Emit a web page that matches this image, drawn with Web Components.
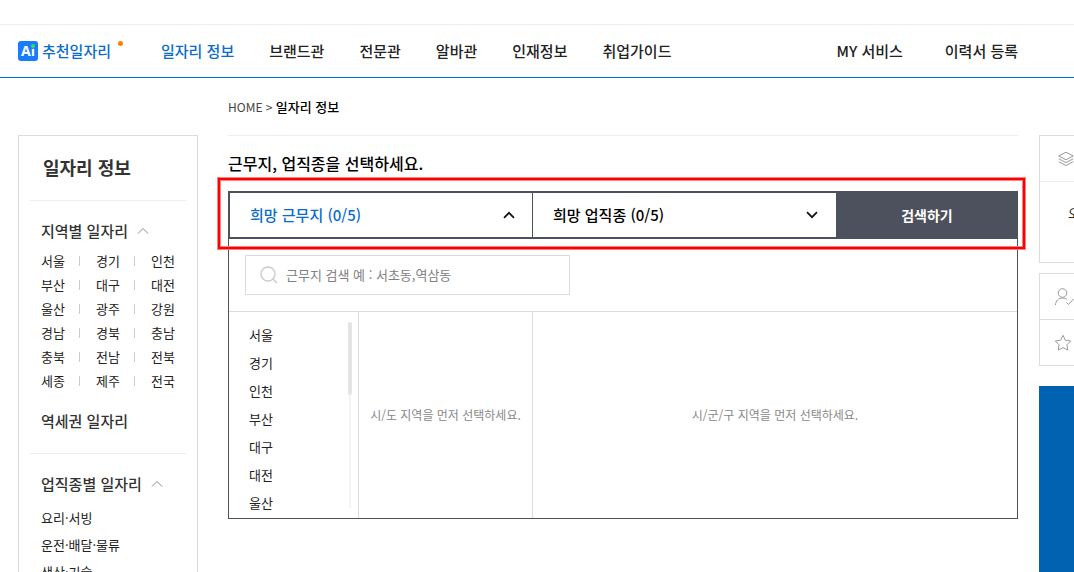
<!DOCTYPE html>
<html lang="ko">
<head>
<meta charset="utf-8">
<title>일자리 정보</title>
<style>
html{overflow:hidden}
body{margin:0;background:#fff;color:#222;font:13px/20px "Noto Sans CJK KR","Noto Sans",sans-serif}
</style>
</head>
<body>
<job-page></job-page>
<script>
const BASE = `*{box-sizing:border-box}
a{color:inherit;text-decoration:none}
ul,h1,h2,p{margin:0;padding:0;list-style:none;font-weight:inherit;font-size:inherit}
button,input{font:inherit;color:inherit;border:0;padding:0;margin:0;background:none;border-radius:0}
svg{display:block;fill:none}`;

function define(name, css, html) {
  customElements.define(name, class extends HTMLElement {
    constructor() {
      super();
      const body = typeof html === 'function' ? html(this) : html;
      this.attachShadow({mode: 'open'}).innerHTML = `<style>${BASE}${css}</style>${body}`;
    }
  });
}

define('ai-badge', `
:host{display:block;position:relative;width:20px;height:20px;border-radius:3px;background:#187cff;color:#fff;
  font:bold 14px/20px "Open Sans",sans-serif;text-align:center}
i{position:absolute;right:3px;top:3px;width:4px;height:4px;border-radius:2px;background:#3be04a;box-shadow:0 0 0 1px #187cff}
`, `Ai<i></i>`);

define('site-header', `
:host{display:block;margin-top:24px;border-top:1px solid #eee;border-bottom:1px solid #0071c8}
nav{display:flex;align-items:center;height:52px;padding:0 56px 0 18px;gap:35px;font-size:15px;font-weight:500;white-space:nowrap}
.rec{position:relative;display:flex;align-items:center;gap:4px;margin-right:15px;color:#0a6ccb}
.rec::after{content:"";position:absolute;right:-12px;top:0;width:5px;height:5px;border-radius:3px;background:#ff7f00}
.on{color:#0a6ccb}
.my{margin-left:auto;margin-right:7px}
`, `<nav>
<a class="rec" href="#"><ai-badge></ai-badge>추천일자리</a>
<a class="on" href="#">일자리 정보</a><a href="#">브랜드관</a><a href="#">전문관</a><a href="#">알바관</a><a href="#">인재정보</a><a href="#">취업가이드</a>
<a class="my" href="#">MY 서비스</a><a href="#">이력서 등록</a></nav>`);

define('menu-heading', `
:host{display:block;padding-left:11px;color:#333;font-size:15px;font-weight:500;line-height:24px}
a{display:flex;align-items:center;gap:9px}
`, el => `<h2><a href="#"><slot></slot>${el.hasAttribute('open') ?
  '<svg width="12" height="8" viewBox="0 0 12 8" stroke="#888"><path d="M1 6.5 6 1.5l5 5"/></svg>' : ''}</a></h2>`);

define('side-menu', `
:host{display:block;border:1px solid #dcdcdc;border-bottom:0;padding:0 11px;overflow:hidden}
.title{padding:19px 13px 20px;font-size:18px;line-height:25px;font-weight:700;color:#333}
hr{margin:0;border:0;border-top:1px solid #eee}
menu-heading{margin-top:18px}
.areas{display:grid;grid-template-columns:repeat(3,55px);padding:6px 0 0 11px;overflow:hidden;white-space:nowrap}
.areas li{line-height:24px;display:flex;align-items:center;gap:14px}
.areas li:not(:nth-child(3n))::after{content:"";width:1px;height:10px;background:#ccc}
.station{margin:16px 0 20px}
.jobs{padding:8px 0 0 11px}
.jobs li{line-height:27px}
`, `<h1 class="title">일자리 정보</h1><hr>
<menu-heading open>지역별 일자리</menu-heading>
<ul class="areas">${'서울 경기 인천 부산 대구 대전 울산 광주 강원 경남 경북 충남 충북 전남 전북 세종 제주 전국'.split(' ').map(t => `<li><a href="#">${t}</a></li>`).join('')}</ul>
<menu-heading class="station">역세권 일자리</menu-heading><hr>
<menu-heading open>업직종별 일자리</menu-heading>
<ul class="jobs"><li><a href="#">요리·서빙</a></li><li><a href="#">운전·배달·물류</a></li><li><a href="#">생산·기술</a></li></ul>`);

define('picker-tab', `
:host{display:block}
button{display:flex;align-items:center;justify-content:space-between;width:100%;height:100%;padding:0 17px 0 20px;font-size:15px;font-weight:500;color:#000}
:host(:not([open])) button{padding-right:20px}
:host([open]) button{color:#0a6ccb}
:host([open]) svg{transform:rotate(180deg)}
`, el => `<button type="button" aria-expanded="${el.hasAttribute('open')}"><slot></slot>
<svg width="12" height="8" viewBox="0 0 12 8" stroke="#111" stroke-width="1.7"><path d="M1 1.2 6 6.2l5-5"/></svg></button>`);

define('region-panel', `
:host{display:block;border:1px solid #4d505d;border-top:0}
.find{padding:16px 16px;border-bottom:1px solid #dcdcdc}
label{display:flex;align-items:center;width:325px;height:40px;border:1px solid #dcdcdc;padding-left:14px;gap:8px}
input{flex:1;min-width:0;height:38px;padding-bottom:2px;outline:0}
input::placeholder{color:#808080;opacity:1}
.cols{display:grid;grid-template-columns:130px 174px 1fr;height:206px}
.cols>*{border-right:1px solid #dcdcdc;min-width:0}
.cols>:last-child{border:0}
.list{display:flex;justify-content:space-between;padding:0 6px 0 20px;overflow:hidden}
.list ul{padding-top:9px}
.list button{display:block;line-height:28px;white-space:nowrap}
.bar{width:4px;height:186px;margin-top:10px;background:linear-gradient(#f3f3f3,#f3f3f3) center/2px 100% no-repeat}
.bar i{display:block;height:73px;border-radius:2px;background:#e4e4e4}
p{display:flex;align-items:center;justify-content:center;font-size:12px;color:#888;white-space:nowrap}
`, `<div class="find"><label><svg width="18" height="18" viewBox="0 0 18 18" stroke="#ccc" stroke-width="1.4"><circle cx="8" cy="8" r="7"/><path d="m13 13 4 4"/></svg>
<input type="text" aria-label="근무지 검색" placeholder="근무지 검색 예 : 서초동,역삼동"></label></div>
<div class="cols"><div class="list"><ul>${'서울 경기 인천 부산 대구 대전 울산'.split(' ').map(t => `<li><button type="button">${t}</button></li>`).join('')}</ul><div class="bar"><i></i></div></div>
<p>시/도 지역을 먼저 선택하세요.</p><p>시/군/구 지역을 먼저 선택하세요.</p></div>`);

define('job-search', `
:host{display:block;position:relative}
.tabs{display:grid;grid-template-columns:304px 304px 1fr;height:48px;border:2px solid #4d505d;border-right:0}
.tabs>:first-child{border-right:1px solid #4d505d;width:303px}
.tabs>:nth-child(2){margin-left:-1px}
.go{background:#4d505d;color:#fff;font-size:14px;font-weight:700;margin-left:-2px}
.mark{position:absolute;left:-11px;right:-8px;top:-14px;height:73px;border:4px solid #ff8080;pointer-events:none}
.mark::after{content:"";position:absolute;inset:-3px;border:2px solid #f00}
`, `<div class="tabs"><picker-tab open>희망 근무지 (0/5)</picker-tab><picker-tab>희망 업직종 (0/5)</picker-tab><button class="go" type="button">검색하기</button></div>
<region-panel></region-panel><div class="mark"></div>`);

define('quick-menu', `
:host{display:block;overflow:hidden;min-width:0}
.box{width:90px;border:1px solid #dcdcdc;margin-bottom:10px}
.box>*{display:flex;align-items:center;height:45px;padding-left:14px}
.box>*+*{height:46px;border-top:1px solid #dcdcdc}
.box>.layers{padding-left:17px}
.box>.recent{height:81px;padding:0 0 18px 28px;border-color:#eee}
.ad{display:block;width:90px;height:260px;margin-top:20px;background:#0062b1}
`, `<div class="box"><a class="layers" href="#" aria-label="최근"><svg width="18" height="16" viewBox="0 0 18 16" stroke="#999"><path d="M9 1.2 16.2 5 9 8.7 1.8 5zM1.8 7.8 9 11.6l7.2-3.8M1.8 10.7 9 14.5l7.2-3.8"/></svg></a><div class="recent">오</div></div>
<div class="box"><a href="#" aria-label="회원"><svg width="20" height="18" viewBox="0 0 20 18" stroke="#999"><circle cx="8.500" cy="5" r="4.300"/><path d="M1.500 17c.2-4.300 3-7 7-7 1.800 0 3.200.4 4.300 1.300M12.500 14.500l2 2 5-5.500"/></svg></a>
<a href="#" aria-label="관심"><svg width="18" height="17" viewBox="0 0 18 17" stroke="#999"><path d="m9 1.300 2.400 4.900 5.300.8-3.800 3.800.9 5.300L9 13.600l-4.800 2.500.9-5.300L1.300 7l5.300-.8z"/></svg></a></div>
<a class="ad" href="#" aria-label="광고"></a>`);

define('job-page', `
:host{display:flex;flex-direction:column;height:100vh;overflow:hidden}
.body{flex:1;min-height:0;display:grid;grid-template:minmax(0,1fr)/180px minmax(0,1fr) 35px;margin-left:18px}
main{margin:0 21px 0 30px}
.crumb{height:57px;padding-top:19px;font-size:12px;color:#444}
.crumb b{font-size:13px;font-weight:500;color:#000}
side-menu,quick-menu{margin-top:57px}
h2{border-top:1px solid #eee;padding:15px 0 16px;font-size:16px;line-height:24px;font-weight:500;color:#000}
`, `<site-header></site-header><div class="body"><side-menu></side-menu>
<main><div class="crumb"><a href="#">HOME</a> &gt; <b>일자리 정보</b></div><h2>근무지, 업직종을 선택하세요.</h2><job-search></job-search></main>
<quick-menu></quick-menu></div>`);
</script>
</body>
</html>
